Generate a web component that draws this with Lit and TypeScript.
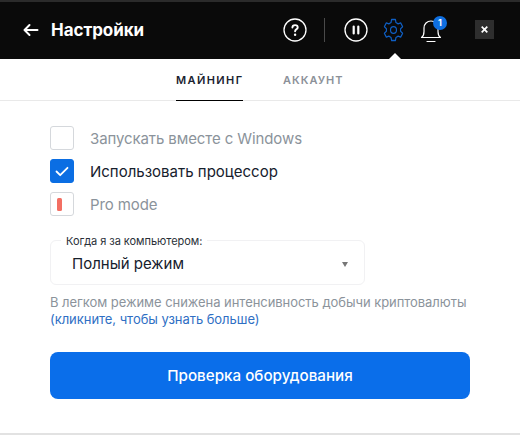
import { LitElement, html, css } from "lit";
import { customElement } from "lit/decorators.js";

@customElement("app-root")
export class AppRoot extends LitElement {
  static styles = css`
    :host { display: block; width: 520px; height: 435px; background: #fff; font-family: Inter, "Noto Sans", sans-serif; overflow: hidden; box-sizing: border-box; border-bottom: 2px solid #e2e2e2; }
    * { box-sizing: border-box; }
    .head { height: 59px; background: #0a0a0a; border-top: 2px solid #2b2b2b; display: flex; align-items: center; padding: 0 0 2px 23px; position: relative; color: #fff; }
    .back { width: 16px; height: 14px; display: block; }
    .title { margin-left: 12px; font-size: 17px; font-weight: 700; letter-spacing: -0.05px; }
    .icons { margin-left: auto; display: flex; align-items: center; }
    .circle { width: 24px; height: 24px; display: block; }
    .help { margin-right: 17px; }
    .sep { width: 1px; height: 24px; background: #4a4a4a; margin-right: 19px; }
    .gear { width: 21px; height: 24px; margin-left: 15px; display: block; }
    .bellwrap { position: relative; width: 24px; height: 28px; margin-left: 16px; margin-right: 31px; }
    .bell { width: 22px; height: 26px; display: block; margin-top: 2px; }
    .badge { position: absolute; left: 13px; top: 0; width: 14px; height: 14px; border-radius: 50%; background: #0f6fe0; color: #fff; font-size: 9px; font-weight: 700; display: flex; align-items: center; justify-content: center; }
    .close { width: 19px; height: 19px; background: #2e2e2e; display: flex; align-items: center; justify-content: center; margin-right: 26px; }
    .close svg { width: 7px; height: 7px; display: block; }
    .notch { position: absolute; left: 389px; bottom: 0; width: 0; height: 0; border-left: 6px solid transparent; border-right: 6px solid transparent; border-bottom: 6px solid #fff; }
    .tabs { height: 42px; border-bottom: 1px solid #e9e9e9; display: flex; padding-left: 176px; }
    .tab { font-size: 11px; font-weight: 600; letter-spacing: 1.4px; padding-top: 14px; color: #8c9199; height: 42px; white-space: nowrap; }
    .tab.on { width: 67px; color: #1a2230; border-bottom: 1px solid #000; }
    .tab.off { margin-left: 40px; letter-spacing: 1px; }
    .opts { padding: 25px 50px 0; display: flex; flex-direction: column; gap: 9px; }
    .opt { display: flex; align-items: center; height: 24px; font-size: 15px; color: #8b939b; letter-spacing: -0.1px; }
    .opt.act { color: #16202c; letter-spacing: 0; }
    .box { width: 24px; height: 24px; border: 1px solid #d5d8dc; border-radius: 3px; margin-right: 16px; display: flex; align-items: center; justify-content: center; flex: none; }
    .box.on { background: #0b6ee3; border-color: #0b6ee3; }
    .box svg { width: 14px; height: 11px; display: block; }
    .pill { width: 5px; height: 13px; background: #f36f63; border-radius: 1.5px; margin-left: -5px; }
    .sel { margin: 24px 0 0 50px; width: 315px; height: 45px; border: 1px solid #f1f1f3; border-radius: 6px; position: relative; display: flex; align-items: center; padding: 1px 16px 0 21px; font-size: 15px; color: #16202c; }
    .legend { position: absolute; left: 10px; top: -6px; padding: 0 5px; background: #fff; font-size: 11px; line-height: 12px; letter-spacing: -0.05px; color: #2a3038; white-space: nowrap; }
    .arrow { margin-left: auto; width: 0; height: 0; border-left: 3px solid transparent; border-right: 3px solid transparent; border-top: 5px solid #777; margin-top: 2px; }
    .note { margin: 9px 0 0 50px; font-size: 13px; line-height: 17px; color: #8b939b; white-space: nowrap; letter-spacing: -0.05px; }
    .note a { color: #2f6fc4; display: block; }
    .btn { margin: 24px 0 0 50px; width: 420px; height: 47px; padding-bottom: 1px; background: #0a6eea; border-radius: 8px; color: #fff; font-size: 15.2px; font-weight: 500; display: flex; align-items: center; justify-content: center; }
  `;

  render() {
    return html`
      <div class="head">
        <svg class="back" viewBox="0 0 16 14" fill="none" stroke="#fff" stroke-width="2" stroke-linecap="round" stroke-linejoin="round"><path d="M1.5 7h13M6.5 2 1.5 7l5 5"/></svg>
        <div class="title">Настройки</div>
        <div class="icons">
          <svg class="circle help" viewBox="0 0 24 24" fill="none"><circle cx="12" cy="12" r="11" stroke="#fff" stroke-width="1.3"/><path d="M9.4 9.6c0-1.5 1.1-2.5 2.7-2.5s2.6 1 2.6 2.3c0 1.9-2.6 2-2.6 3.9" stroke="#fff" stroke-width="1.9" stroke-linecap="round"/><circle cx="12.1" cy="16.8" r="1.2" fill="#fff"/></svg>
          <div class="sep"></div>
          <svg class="circle" viewBox="0 0 24 24" fill="none"><circle cx="12" cy="12" r="11" stroke="#fff" stroke-width="1.3"/><path d="M9.7 8.5v7M14.3 8.5v7" stroke="#fff" stroke-width="2.2" stroke-linecap="round"/></svg>
          <svg class="gear" viewBox="0 0 24 24" preserveAspectRatio="none" fill="none" stroke="#0f5fc4" stroke-width="1.3" stroke-linejoin="round"><path d="M9.8 1.5h4.4l.6 3 2.5 1.4 2.9-1 2.2 3.8-2.3 2v2.6l2.3 2-2.2 3.800-2.900-1-2.500 1.400-.6 3H9.800l-.6-3-2.500-1.400-2.900 1-2.200-3.800 2.300-2v-2.600l-2.300-2 2.200-3.800 2.900 1 2.500-1.400z"/><circle cx="12" cy="12" r="3.4"/></svg>
          <div class="bellwrap">
            <svg class="bell" viewBox="0 0 22 26" fill="none" stroke="#fff" stroke-width="1.2" stroke-linecap="round" stroke-linejoin="round"><path d="M1.5 19.5c2-1.3 2.5-3 2.5-6V10c0-4 3-7 7-7s7 3 7 7v3.500c0 3 .5 4.700 2.500 6z"/><path d="M7 23.500h8"/></svg>
            <div class="badge">1</div>
          </div>
          <div class="close"><svg viewBox="0 0 7 7" stroke="#fff" stroke-width="1.7"><path d="M.7.7l5.600 5.600M6.300.7.700 6.300"/></svg></div>
        </div>
        <div class="notch"></div>
      </div>
      <div class="tabs">
        <div class="tab on">МАЙНИНГ</div>
        <div class="tab off">АККАУНТ</div>
      </div>
      <div class="opts">
        <div class="opt"><span class="box"></span>Запускать вместе с Windows</div>
        <div class="opt act"><span class="box on"><svg viewBox="0 0 14 11" fill="none" stroke="#fff" stroke-width="1.8" stroke-linecap="round" stroke-linejoin="round"><path d="M1.500 5.500 5.200 9.200 12.500 1.800"/></svg></span>Использовать процессор</div>
        <div class="opt"><span class="box"><span class="pill"></span></span>Pro mode</div>
      </div>
      <div class="sel">
        <span class="legend">Когда я за компьютером:</span>
        Полный режим
        <span class="arrow"></span>
      </div>
      <div class="note">В легком режиме снижена интенсивность добычи криптовалюты<a>(кликните, чтобы узнать больше)</a></div>
      <div class="btn">Проверка оборудования</div>
    `;
  }
}
